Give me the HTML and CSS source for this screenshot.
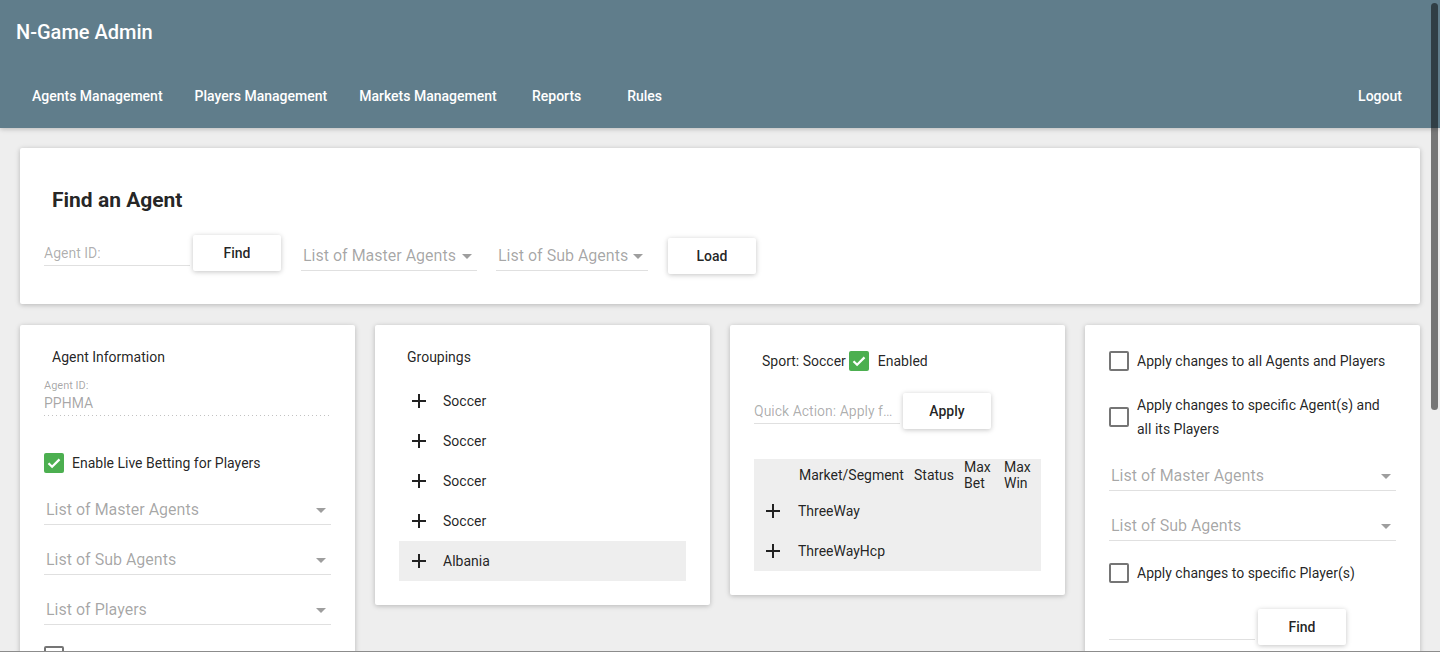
FILE: index.html
```html
<!DOCTYPE html>
<html lang="en">
<head>
<meta charset="utf-8">
<title>N-Game Admin</title>
<link rel="stylesheet" href="styles.css">
</head>
<body>
<header class="appbar">
  <div class="bar-title">N-Game Admin</div>
  <nav class="bar-nav">
    <a class="nav-btn">Agents Management</a>
    <a class="nav-btn">Players Management</a>
    <a class="nav-btn">Markets Management</a>
    <a class="nav-btn">Reports</a>
    <a class="nav-btn">Rules</a>
    <span class="spacer"></span>
    <a class="nav-btn">Logout</a>
  </nav>
</header>

<main class="content">
  <section class="card find-card">
    <h2 class="find-title">Find an Agent</h2>
    <div class="find-row">
      <div class="tf">Agent ID:</div>
      <button class="btn btn-attached">Find</button>
      <div class="sel sel-inline sel-master"><span>List of Master Agents</span><i class="caret"></i></div>
      <div class="sel sel-inline sel-sub"><span>List of Sub Agents</span><i class="caret"></i></div>
      <button class="btn btn-load">Load</button>
    </div>
  </section>

  <div class="grid">
    <section class="card col-card">
      <div class="card-title">Agent Information</div>
      <div class="ro-field">
        <div class="ro-label">Agent ID:</div>
        <div class="ro-value">PPHMA</div>
      </div>
      <label class="cb-row live-row">
        <span class="cb on"><svg viewBox="0 0 20 20" width="20" height="20"><path d="M4.5 10.2l3.6 3.6 7.4-7.4" fill="none" stroke="#fff" stroke-width="2.2"/></svg></span>
        <span>Enable Live Betting for Players</span>
      </label>
      <div class="sel sel-block"><span>List of Master Agents</span><i class="caret"></i></div>
      <div class="sel sel-block"><span>List of Sub Agents</span><i class="caret"></i></div>
      <div class="sel sel-block"><span>List of Players</span><i class="caret"></i></div>
      <label class="cb-row extra-row"><span class="cb"></span></label>
    </section>

    <section class="card col-card">
      <div class="card-title">Groupings</div>
      <ul class="group-list">
        <li class="group-item"><svg class="plus" viewBox="0 0 24 24" width="24" height="24"><path d="M19 13h-6v6h-2v-6H5v-2h6V5h2v6h6v2z"/></svg><span>Soccer</span></li>
        <li class="group-item"><svg class="plus" viewBox="0 0 24 24" width="24" height="24"><path d="M19 13h-6v6h-2v-6H5v-2h6V5h2v6h6v2z"/></svg><span>Soccer</span></li>
        <li class="group-item"><svg class="plus" viewBox="0 0 24 24" width="24" height="24"><path d="M19 13h-6v6h-2v-6H5v-2h6V5h2v6h6v2z"/></svg><span>Soccer</span></li>
        <li class="group-item"><svg class="plus" viewBox="0 0 24 24" width="24" height="24"><path d="M19 13h-6v6h-2v-6H5v-2h6V5h2v6h6v2z"/></svg><span>Soccer</span></li>
        <li class="group-item active"><svg class="plus" viewBox="0 0 24 24" width="24" height="24"><path d="M19 13h-6v6h-2v-6H5v-2h6V5h2v6h6v2z"/></svg><span>Albania</span></li>
      </ul>
    </section>

    <section class="card col-card">
      <div class="sport-row">
        <span>Sport: Soccer</span>
        <span class="cb on"><svg viewBox="0 0 20 20" width="20" height="20"><path d="M4.5 10.2l3.6 3.6 7.4-7.4" fill="none" stroke="#fff" stroke-width="2.2"/></svg></span>
        <span class="enabled">Enabled</span>
      </div>
      <div class="qa-row">
        <div class="tf">Quick Action: Apply f…</div>
        <button class="btn btn-attached">Apply</button>
      </div>
      <div class="mkt-table">
        <div class="mkt-head">
          <span></span>
          <span>Market/Segment</span>
          <span>Status</span>
          <span>Max Bet</span>
          <span>Max Win</span>
        </div>
        <div class="mkt-row">
          <svg class="plus" viewBox="0 0 24 24" width="24" height="24"><path d="M19 13h-6v6h-2v-6H5v-2h6V5h2v6h6v2z"/></svg>
          <span>ThreeWay</span>
        </div>
        <div class="mkt-row">
          <svg class="plus" viewBox="0 0 24 24" width="24" height="24"><path d="M19 13h-6v6h-2v-6H5v-2h6V5h2v6h6v2z"/></svg>
          <span>ThreeWayHcp</span>
        </div>
      </div>
    </section>

    <section class="card col-card">
      <label class="cb-row"><span class="cb"></span><span>Apply changes to all Agents and Players</span></label>
      <label class="cb-row gap-row"><span class="cb"></span><span class="wrap-label">Apply changes to specific Agent(s) and all its Players</span></label>
      <div class="sel sel-block"><span>List of Master Agents</span><i class="caret"></i></div>
      <div class="sel sel-block"><span>List of Sub Agents</span><i class="caret"></i></div>
      <label class="cb-row gap-row"><span class="cb"></span><span>Apply changes to specific Player(s)</span></label>
      <div class="find-player-row">
        <div class="tf"></div>
        <button class="btn btn-attached">Find</button>
      </div>
    </section>
  </div>
</main>

<div class="scroll-thumb"></div>
<div class="window-edge"></div>
</body>
</html>
```

FILE: styles.css
```css
html {
  overflow: hidden;
}

body {
  margin: 0;
  background: #eeeeee;
  font-family: Roboto, "Liberation Sans", Arial, sans-serif;
  color: rgba(0, 0, 0, 0.87);
  font-size: 14px;
}

/* ---------- App bar ---------- */
.appbar {
  position: relative;
  z-index: 1;
  background: #607d8b;
  color: #fff;
  box-shadow: 0 1px 6px rgba(0, 0, 0, 0.12), 0 1px 4px rgba(0, 0, 0, 0.12);
}

.bar-title {
  height: 64px;
  display: flex;
  align-items: center;
  padding: 0 16px;
  font-size: 20px;
  font-weight: 500;
}

.bar-nav {
  height: 64px;
  display: flex;
  align-items: center;
  padding: 0 16px;
}

.nav-btn {
  box-sizing: border-box;
  min-width: 88px;
  height: 36px;
  line-height: 36px;
  padding: 0 16px;
  text-align: center;
  font-size: 14px;
  font-weight: 500;
  color: #fff;
  cursor: pointer;
}

.spacer {
  flex: 1;
}

/* ---------- Content ---------- */
.content {
  padding: 20px;
}

.card {
  background: #fff;
  border-radius: 2px;
  box-shadow: 0 1px 6px rgba(0, 0, 0, 0.12), 0 1px 4px rgba(0, 0, 0, 0.12);
}

.find-card {
  padding: 40px 24px 30px 24px;
}

.find-title {
  margin: 0 0 23px 8px;
  font-size: 21px;
  line-height: 24px;
  font-weight: 700;
}

.find-row {
  display: flex;
  align-items: flex-start;
}

/* text field */
.tf {
  width: 146px;
  height: 22px;
  padding-top: 8px;
  line-height: 20px;
  font-size: 14px;
  color: rgba(0, 0, 0, 0.32);
  border-bottom: 1px solid #e0e0e0;
  white-space: nowrap;
  overflow: hidden;
}

/* buttons */
.btn {
  width: 88px;
  height: 36px;
  border: 0;
  padding: 0;
  background: #fff;
  border-radius: 2px;
  box-shadow: 0 1px 6px rgba(0, 0, 0, 0.12), 0 1px 4px rgba(0, 0, 0, 0.12);
  font-family: Roboto, "Liberation Sans", Arial, sans-serif;
  font-size: 14px;
  font-weight: 500;
  color: rgba(0, 0, 0, 0.87);
  flex: none;
}

.btn-attached {
  margin-left: 3px;
}

.btn-load {
  margin-left: 20px;
  margin-top: 3px;
}

/* selects */
.sel {
  display: flex;
  align-items: center;
  justify-content: space-between;
  padding-left: 2px;
  padding-right: 5px;
  border-bottom: 1px solid #e0e0e0;
  font-size: 16px;
  line-height: 24px;
  color: rgba(0, 0, 0, 0.36);
  box-sizing: content-box;
}

.sel-inline {
  padding-top: 9px;
  padding-bottom: 2px;
  margin-left: 20px;
}

.sel-master {
  width: 169px;
}

.sel-sub {
  width: 145px;
  margin-left: 19px;
}

.sel-block {
  padding-top: 23px;
  padding-bottom: 2px;
}

.caret {
  width: 0;
  height: 0;
  border-left: 5px solid transparent;
  border-right: 5px solid transparent;
  border-top: 5px solid #9e9e9e;
  flex: none;
}

/* grid of cards */
.grid {
  margin-top: 21px;
  display: grid;
  grid-template-columns: repeat(4, 1fr);
  gap: 20px;
  align-items: start;
}

.col-card {
  padding: 24px;
}

.card-title {
  margin-left: 8px;
  line-height: 16px;
  font-size: 14px;
}

/* read-only field */
.ro-field {
  margin-top: 14px;
  padding-bottom: 2px;
  background: linear-gradient(to right, #c2c2c2 1px, transparent 1px) 0 100% / 4px 1px repeat-x;
}

.ro-label {
  font-size: 11px;
  line-height: 14px;
  color: rgba(0, 0, 0, 0.36);
}

.ro-value {
  font-size: 14px;
  line-height: 20px;
  color: rgba(0, 0, 0, 0.36);
  padding-bottom: 1px;
}

/* checkbox rows */
.cb-row {
  display: flex;
  align-items: center;
  gap: 8px;
  line-height: 24px;
  font-size: 14px;
}

.live-row {
  margin-top: 35px;
}

.extra-row {
  margin-top: 21px;
}

.gap-row {
  margin-top: 20px;
}

.wrap-label {
  max-width: 250px;
}

.cb {
  box-sizing: border-box;
  width: 20px;
  height: 20px;
  border: 2px solid #757575;
  border-radius: 2px;
  flex: none;
  display: inline-flex;
}

.cb.on {
  border: 0;
  background: #4caf50;
}

.cb svg {
  display: block;
}

/* groupings */
.group-list {
  list-style: none;
  margin: 16px 0 0 0;
  padding: 0;
}

.group-item {
  display: flex;
  align-items: center;
  height: 40px;
  padding-left: 8px;
  font-size: 14px;
}

.group-item.active {
  background: #eeeeee;
}

.plus {
  fill: #212121;
  flex: none;
  margin-right: 12px;
}

/* sport card */
.sport-row {
  display: flex;
  align-items: center;
  margin-left: 8px;
  line-height: 24px;
  font-size: 14px;
}

.sport-row .cb {
  margin-left: 3px;
}

.enabled {
  margin-left: 9px;
}

.qa-row,
.find-player-row {
  display: flex;
  align-items: flex-start;
  margin-top: 20px;
}

.find-player-row {
  margin-top: 24px;
}

.mkt-table {
  margin-top: 30px;
  background: #eeeeee;
  font-size: 14px;
}

.mkt-head {
  display: grid;
  grid-template-columns: 45px 115px 50px 40px 1fr;
  align-items: center;
  line-height: 16px;
  min-height: 32px;
}

.mkt-row {
  display: flex;
  align-items: center;
  height: 40px;
  padding-left: 7px;
}

.mkt-row .plus {
  margin-right: 13px;
}

/* overlays */
.scroll-thumb {
  position: fixed;
  top: 3px;
  right: 2px;
  width: 7px;
  height: 407px;
  border-radius: 4px;
  background: rgba(0, 0, 0, 0.5);
  z-index: 5;
}

.window-edge {
  position: fixed;
  left: 0;
  right: 0;
  bottom: 0;
  height: 1px;
  background: #8c8c8c;
  z-index: 5;
}
```
